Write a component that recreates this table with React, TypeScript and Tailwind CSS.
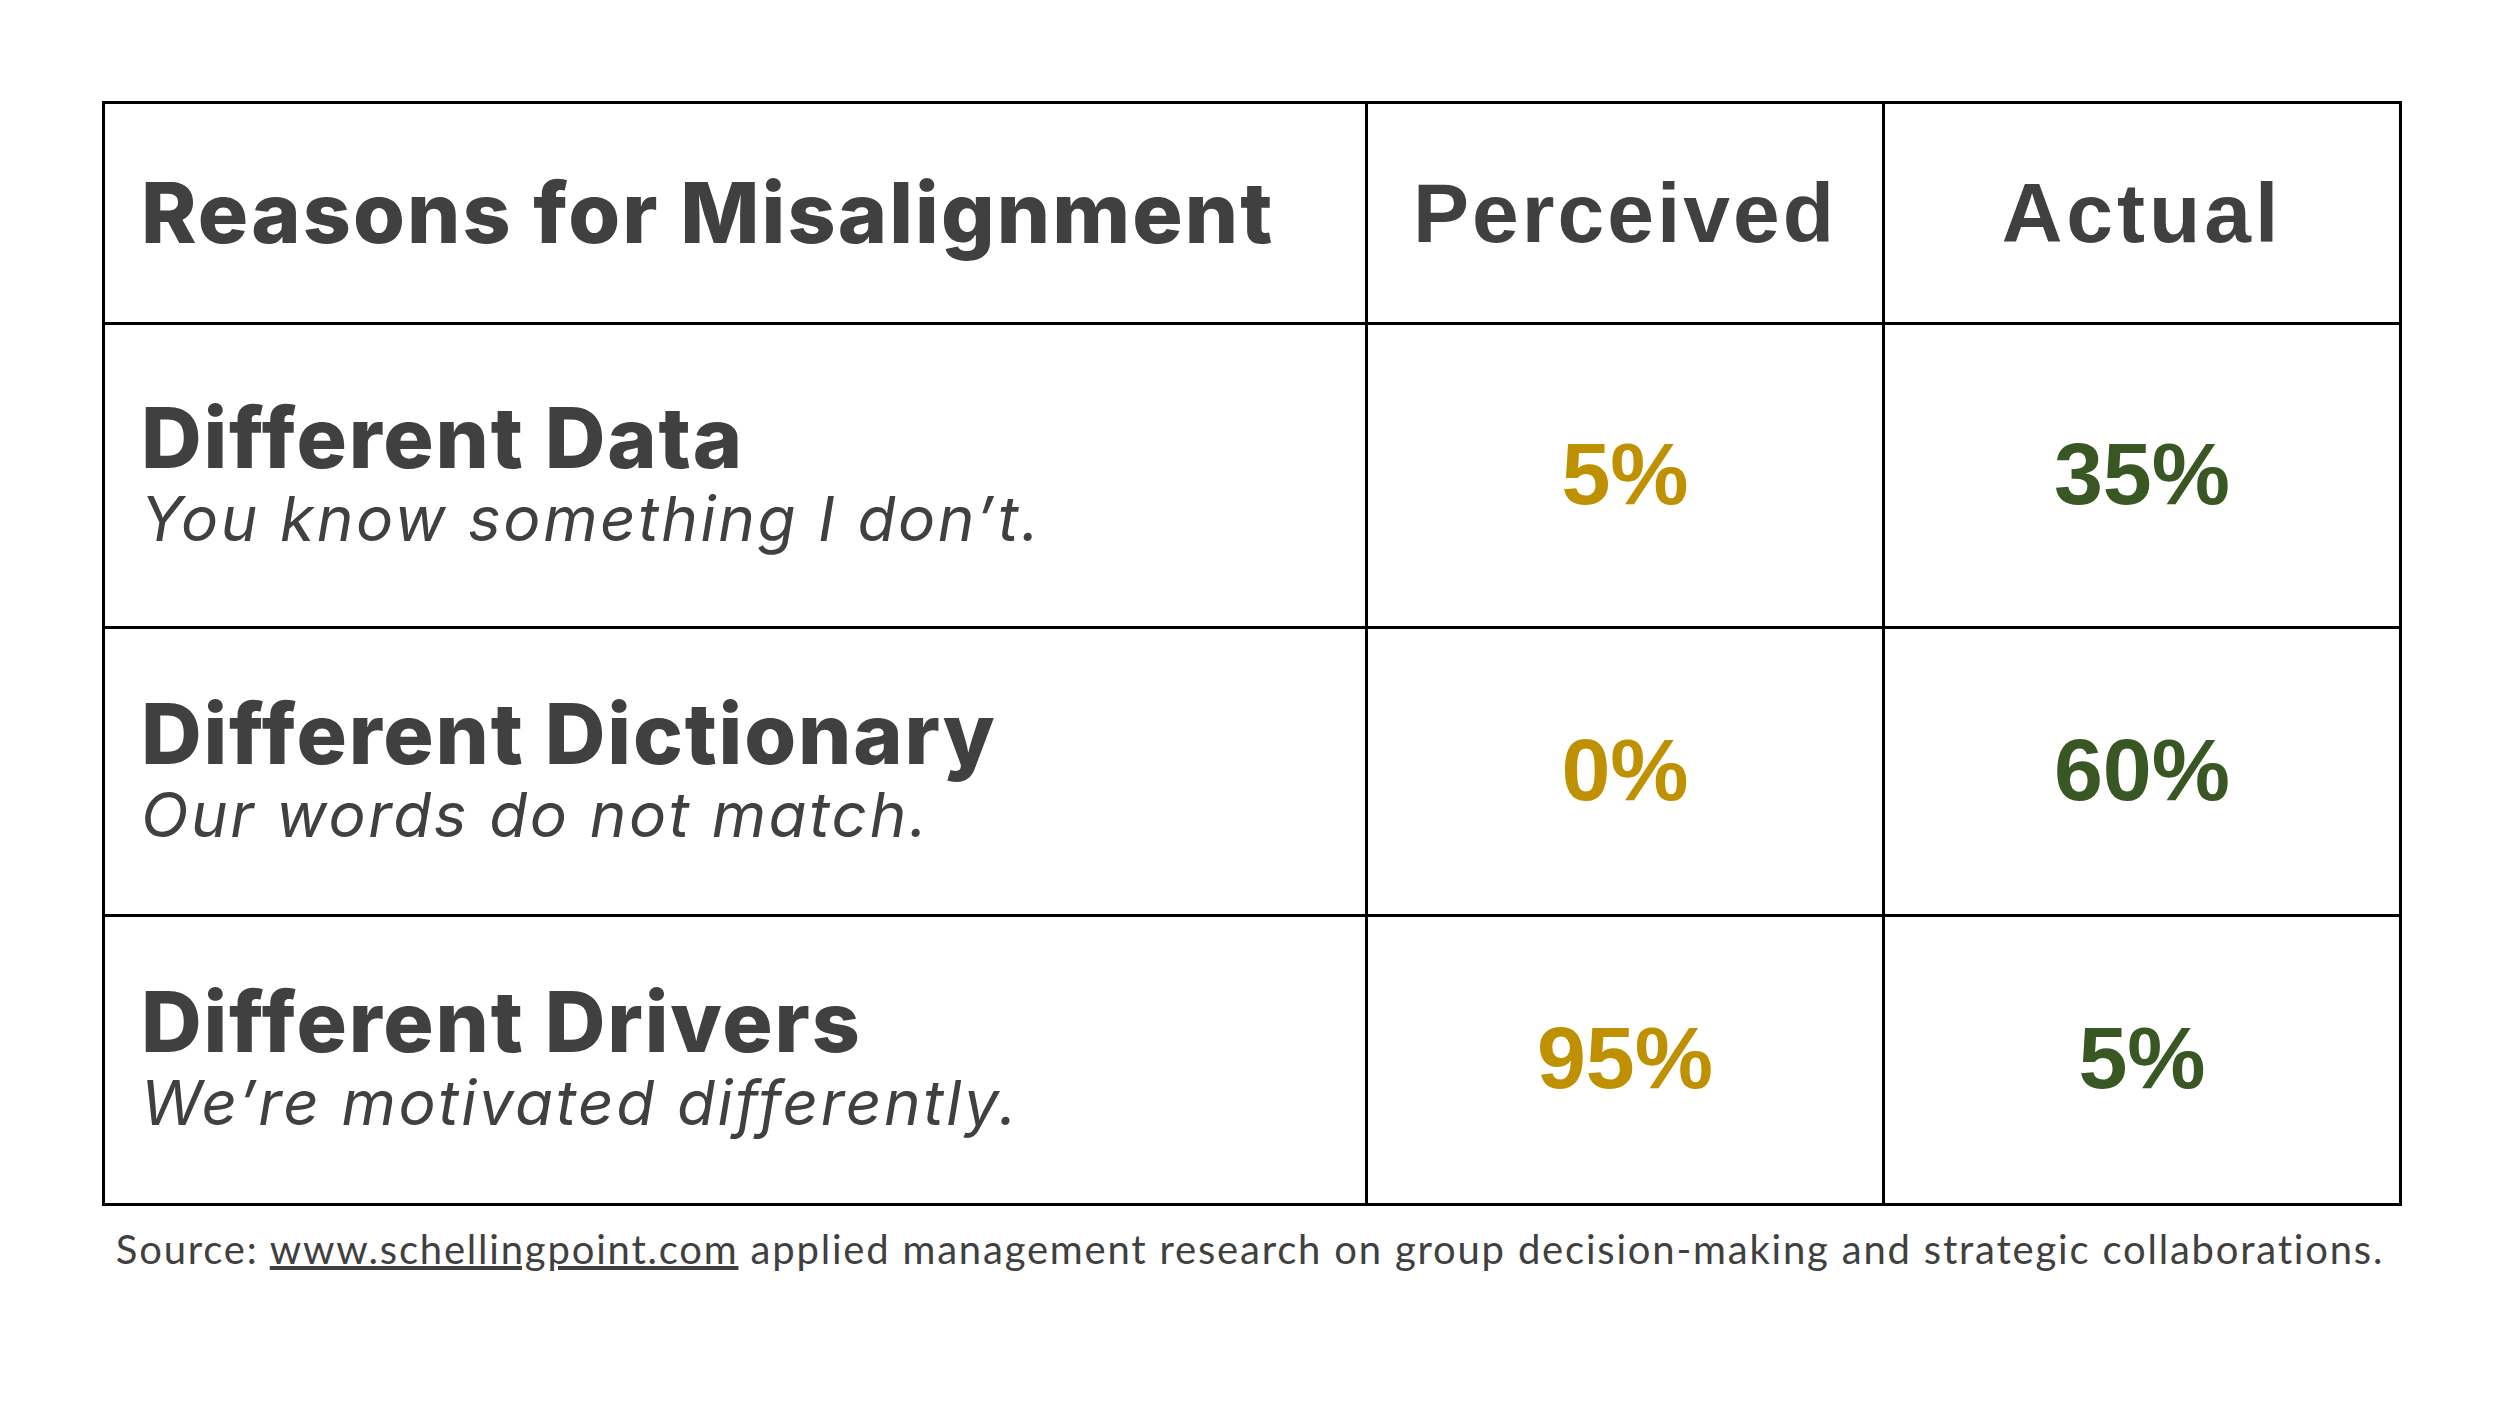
import React from "react";

const rows = [
  { title: "Different Data", sub: "You know something I don\u2019t.", p: "5%", a: "35%", h: "h-[301px]" },
  { title: "Different Dictionary", sub: "Our words do not match.", p: "0%", a: "60%", h: "h-[285px]" },
  { title: "Different Drivers", sub: "We\u2019re motivated differently.", p: "95%", a: "5%", h: "h-[286px]" },
];

export default function App() {
  return (
    <div className="w-[2500px] h-[1406px] bg-white pt-[101px]">
      <div className="ml-[102px] w-[2300px] bg-black p-[3px] grid grid-cols-[1260px_514px_514px] gap-[3px]">
        <div className="bg-white h-[218px] flex items-center pl-[36px] font-['Inter'] font-extrabold text-[84px] text-[#404040] tracking-[2.1px]">
          Reasons for Misalignment
        </div>
        <div className="bg-white h-[218px] flex items-center justify-center font-['Liberation_Sans'] font-bold text-[84px] text-[#404040] tracking-[3px]">
          Perceived
        </div>
        <div className="bg-white h-[218px] flex items-center justify-center font-['Liberation_Sans'] font-bold text-[84px] text-[#404040] tracking-[4px]">
          Actual
        </div>
        {rows.map((r) => (
          <React.Fragment key={r.title}>
            <div className={`bg-white ${r.h} flex flex-col justify-center pl-[36px] pb-[4px] text-[#404040]`}>
              <div className="font-['Inter'] font-extrabold text-[84px] leading-[90px] tracking-[1.8px]">{r.title}</div>
              <div className="font-['Inter'] italic font-normal text-[62px] leading-[72px] tracking-[2.6px]">{r.sub}</div>
            </div>
            <div className={`bg-white ${r.h} flex items-center justify-center pb-[4px] font-['Liberation_Sans'] font-bold text-[88px] text-[#BF9000]`}>
              {r.p}
            </div>
            <div className={`bg-white ${r.h} flex items-center justify-center pb-[4px] font-['Liberation_Sans'] font-bold text-[88px] text-[#385723]`}>
              {r.a}
            </div>
          </React.Fragment>
        ))}
      </div>
      <div className="mt-[13px] text-center font-['Lato'] text-[40px] text-[#404040] tracking-[1.8px]">
        Source: <span className="underline">www.schellingpoint.com</span> applied management research on group decision-making and strategic collaborations.
      </div>
    </div>
  );
}
